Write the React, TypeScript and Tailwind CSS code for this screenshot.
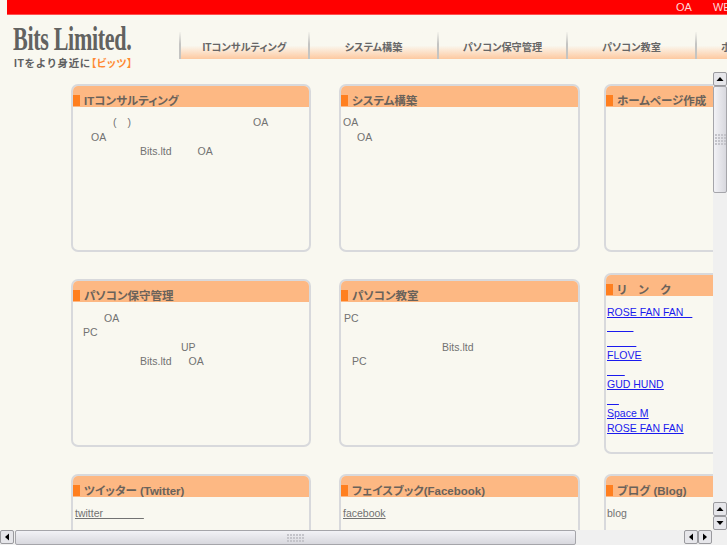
import React from 'react';

const navItems = ['ITコンサルティング', 'システム構築', 'パソコン保守管理', 'パソコン教室', 'ホームページ作成'];

type Piece = { text: string; left: string };

const Line = ({ pieces }: { pieces: Piece[] }) => (
  <div className="flex h-[14.5px] items-center whitespace-pre">
    {pieces.map((p, i) => (
      <span key={i} className={p.left}>
        {p.text}
      </span>
    ))}
  </div>
);

const Card = ({
  title,
  size,
  children,
}: {
  title: string;
  size: string;
  children?: React.ReactNode;
}) => (
  <section className={`shrink-0 overflow-hidden rounded-[7px] border-2 border-[#d8d9dc] bg-[#f9f8f0] ${size}`}>
    <h2 className="flex h-[21px] items-end whitespace-pre bg-[#fdb883] text-[11.5px] font-bold leading-[12px] text-[#6a625a] [font-feature-settings:'palt']">
      <span className="mb-px mr-[4px] h-[11px] w-[7px] shrink-0 bg-[#ff7f1f]" />
      {title}
    </h2>
    <div className="pt-px text-[10.5px] leading-[14.5px] text-[#727272]">{children}</div>
  </section>
);

const Grip = ({ className, count }: { className: string; count: number }) => (
  <div className={`grid gap-px ${className}`}>
    {Array.from({ length: count }).map((_, i) => (
      <span key={i} className="h-[2px] w-[2px] bg-[#c4c4ca]" />
    ))}
  </div>
);

const ArrowButton = ({ dir }: { dir: 'up' | 'down' | 'left' | 'right' }) => (
  <div className="flex h-[14px] w-[14px] shrink-0 items-center justify-center rounded-[2px] border border-[#9a9a9e] bg-[#e6e6ea]">
    <svg width="8" height="8" viewBox="0 0 8 8" fill="#000">
      {dir === 'up' && <path d="M4 2 7.5 6H.5z" />}
      {dir === 'down' && <path d="M4 6 .5 2h7z" />}
      {dir === 'left' && <path d="M2 4 6 .5v7z" />}
      {dir === 'right' && <path d="M6 4 2 7.5v-7z" />}
    </svg>
  </div>
);

export default function App() {
  return (
    <div className="relative h-[545px] w-[727px] overflow-hidden bg-[#f9f8f0] font-['Liberation_Sans','Noto_Sans_CJK_JP',sans-serif]">
      <div className="ml-[7px] flex h-[15px] items-center overflow-hidden whitespace-nowrap border-b border-[#ff5050] bg-[#ff0000] text-[11px] text-[#ffd8d8]">
        <span className="ml-[669px]">OA</span>
        <span className="ml-[21px]">WEB</span>
      </div>

      <header className="flex h-[57px]">
        <div className="w-[179px] shrink-0 pl-[13px] pt-[9px]">
          <div className="h-[28px] origin-left scale-x-[0.67] whitespace-nowrap font-['Liberation_Serif',serif] text-[33px] font-bold leading-[30px] tracking-[-0.5px] text-[#626260]">
            Bits Limited.
          </div>
          <div className="mt-[4px] whitespace-nowrap pl-px text-[10.5px] font-bold leading-[14px] tracking-[0.6px] text-[#5f5f5f]">
            ITをより身近に<span className="text-[#ff8a33] [font-feature-settings:'palt']">【ビッツ】</span>
          </div>
        </div>
        <nav className="mt-[17px] flex h-[27px] min-w-0 flex-1 overflow-hidden">
          {navItems.map((item) => (
            <div
              key={item}
              className="flex h-[27px] w-[129px] shrink-0 items-center justify-center whitespace-nowrap border-l-2 bg-gradient-to-b from-[#f9f8f0] from-[50%] to-[#fdc9a0] pt-[4px] text-[10.2px] font-bold text-[#666] [border-image:linear-gradient(to_bottom,#f9f8f0,#c4c4c2_45%)_1] [font-feature-settings:'palt']"
            >
              {item}
            </div>
          ))}
        </nav>
      </header>

      <main className="flex h-[473px] w-[713px] overflow-hidden pl-[71px] pt-[12px]">
        <div className="flex shrink-0 flex-col gap-[27px]">
          <Card title="ITコンサルティング" size="h-[168px] w-[240px]">
            <div className="pt-[7px]">
              <Line pieces={[{ text: '(', left: 'ml-[40px]' }, { text: ')', left: 'ml-[11px]' }, { text: 'OA', left: 'ml-[122px]' }]} />
              <Line pieces={[{ text: 'OA', left: 'ml-[18px]' }]} />
              <Line pieces={[{ text: 'Bits.ltd', left: 'ml-[67px]' }, { text: 'OA', left: 'ml-[26px]' }]} />
            </div>
          </Card>
          <Card title="パソコン保守管理" size="h-[168px] w-[240px]">
            <div className="pt-[7.5px]">
              <Line pieces={[{ text: 'OA', left: 'ml-[31px]' }]} />
              <Line pieces={[{ text: 'PC', left: 'ml-[10px]' }]} />
              <Line pieces={[{ text: 'UP', left: 'ml-[108px]' }]} />
              <Line pieces={[{ text: 'Bits.ltd', left: 'ml-[67px]' }, { text: 'OA', left: 'ml-[17px]' }]} />
            </div>
          </Card>
          <Card title="ツイッター (Twitter)" size="h-[100px] w-[240px]">
            <div className="pl-[2px] pt-[8px]">
              <span className="whitespace-pre underline">twitter              </span>
            </div>
          </Card>
        </div>

        <div className="ml-[28px] flex shrink-0 flex-col gap-[27px]">
          <Card title="システム構築" size="h-[168px] w-[241px]">
            <div className="pt-[7px]">
              <Line pieces={[{ text: 'OA', left: 'ml-[2px]' }]} />
              <Line pieces={[{ text: 'OA', left: 'ml-[16px]' }]} />
            </div>
          </Card>
          <Card title="パソコン教室" size="h-[168px] w-[241px]">
            <div className="pt-[7.5px]">
              <Line pieces={[{ text: 'PC', left: 'ml-[3px]' }]} />
              <Line pieces={[]} />
              <Line pieces={[{ text: 'Bits.ltd', left: 'ml-[101px]' }]} />
              <Line pieces={[{ text: 'PC', left: 'ml-[11px]' }]} />
            </div>
          </Card>
          <Card title="フェイスブック(Facebook)" size="h-[100px] w-[241px]">
            <div className="pl-[2px] pt-[8px]">
              <span className="underline">facebook</span>
            </div>
          </Card>
        </div>

        <div className="ml-[24px] flex shrink-0 flex-col">
          <Card title="ホームページ作成" size="h-[168px] w-[240px]" />
          <div className="mt-[21px]">
            <Card title="リ　ン　ク" size="h-[181px] w-[240px]">
              <div className="flex flex-col pl-[1px] pt-[7.5px] text-[#1a1aee] underline">
                <a className="h-[14.5px] whitespace-pre">ROSE FAN FAN   </a>
                <a className="h-[14.5px] whitespace-pre">         </a>
                <a className="h-[14.5px] whitespace-pre">          </a>
                <a className="h-[14.5px]">FLOVE</a>
                <a className="h-[14.5px] whitespace-pre">      </a>
                <a className="h-[14.5px]">GUD HUND</a>
                <a className="h-[14.5px] whitespace-pre">    </a>
                <a className="h-[14.5px]">Space M</a>
                <a className="h-[14.5px]">ROSE FAN FAN</a>
              </div>
            </Card>
          </div>
          <div className="mt-[20px]">
            <Card title="ブログ (Blog)" size="h-[100px] w-[240px]">
              <div className="pl-[1px] pt-[8px]">blog</div>
            </Card>
          </div>
        </div>
      </main>

      {/* scrollbars sit on top of the page */}
      <div className="absolute right-0 top-[72px] flex h-[458px] w-[14px] flex-col bg-[#f0f0f0]">
        <ArrowButton dir="up" />
        <div className="flex h-[107px] items-center justify-center rounded-[2px] border border-[#a5a5aa] bg-gradient-to-r from-[#f2f2f6] to-[#d8d8de]">
          <Grip className="grid-cols-4" count={16} />
        </div>
        <div className="flex-1" />
        <ArrowButton dir="up" />
        <ArrowButton dir="down" />
      </div>
      <div className="absolute bottom-0 left-0 flex h-[15px] w-[727px] bg-[#f0f0f0]">
        <ArrowButton dir="left" />
        <div className="ml-px flex w-[561px] items-center justify-center rounded-[2px] border border-[#a5a5aa] bg-gradient-to-b from-[#f2f2f6] to-[#d8d8de]">
          <Grip className="grid-cols-6" count={18} />
        </div>
        <div className="flex-1" />
        <ArrowButton dir="left" />
        <ArrowButton dir="right" />
        <div className="w-[15px]" />
      </div>
    </div>
  );
}
